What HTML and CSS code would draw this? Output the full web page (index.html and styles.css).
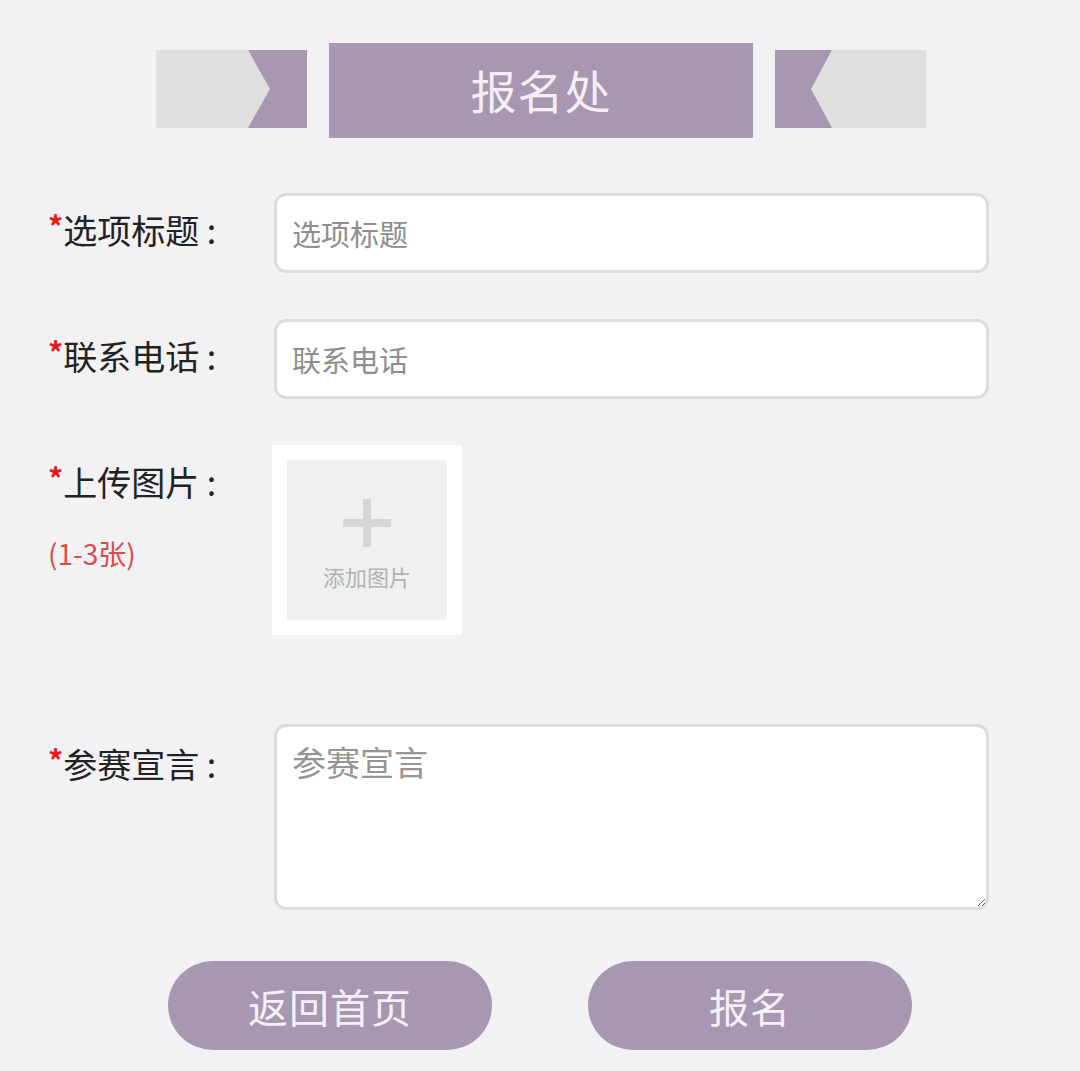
FILE: index.html
```html
<!DOCTYPE html>
<html lang="zh-CN">
<head>
<meta charset="UTF-8" />
<meta name="viewport" content="width=device-width, initial-scale=1" />
<title>报名处</title>
<link rel="stylesheet" href="styles.css">
</head>
<body>
<header class="banner">
  <svg class="ribbon" width="151" height="78" viewBox="0 0 151 78" aria-hidden="true">
    <rect width="151" height="78" fill="#dfdfe0" />
    <polygon points="92,0 151,0 151,78 92,78 114,39" fill="#a797b1" />
  </svg>
  <h1 class="banner-title">报名处</h1>
  <svg class="ribbon" width="151" height="78" viewBox="0 0 151 78" aria-hidden="true">
    <rect width="151" height="78" fill="#dfdfe0" />
    <polygon points="0,0 57,0 36,39 57,78 0,78" fill="#a797b1" />
  </svg>
</header>

<form class="form" onsubmit="return false;">
  <div class="row">
    <label class="label" for="title"><span class="req">*</span>选项标题 :</label>
    <input class="field" id="title" type="text" placeholder="选项标题">
  </div>
  <div class="row">
    <label class="label" for="phone"><span class="req">*</span>联系电话 :</label>
    <input class="field" id="phone" type="tel" placeholder="联系电话">
  </div>
  <div class="row row-top row-upload">
    <div class="label-col">
      <div class="label"><span class="req">*</span>上传图片 :</div>
      <div class="hint">(1-3张)</div>
    </div>
    <div class="upload">
      <div class="upload-inner">
        <svg class="plus" width="48" height="48" viewBox="0 0 48 48" aria-hidden="true">
          <rect x="20" y="0" width="8" height="48" fill="#d6d6d6" />
          <rect x="0" y="20" width="48" height="8" fill="#d6d6d6" />
        </svg>
        <div class="upload-text">添加图片</div>
      </div>
    </div>
  </div>
  <div class="row row-top row-text">
    <label class="label" for="motto"><span class="req">*</span>参赛宣言 :</label>
    <textarea class="field area" id="motto" placeholder="参赛宣言"></textarea>
  </div>
  <div class="actions">
    <button class="btn" type="button">返回首页</button>
    <button class="btn" type="submit">报名</button>
  </div>
</form>
</body>
</html>
```

FILE: styles.css
```css
* {
  box-sizing: border-box;
  margin: 0;
  padding: 0;
}
body {
  background: #f2f1f3;
  font-family: "Noto Sans CJK SC", "Noto Sans", sans-serif;
  color: #222;
}
/* Banner */
.banner {
  display: flex;
  align-items: flex-start;
  justify-content: center;
  gap: 22px;
  padding: 43px 0 0 2px;
  height: 138px;
}
.ribbon {
  display: block;
  flex: none;
  margin-top: 7px;
}
.banner-title {
  width: 424px;
  height: 95px;
  background: #a797b1;
  color: #f6eef6;
  font-size: 46px;
  font-weight: 400;
  text-align: center;
  line-height: 92px;
  letter-spacing: 1px;
}
/* Form */
.form {
  padding: 55px 91px 0 48px;
}
.row {
  display: flex;
  align-items: center;
  margin-bottom: 46px;
}
.row > .label {
  margin-top: -12px;
}
.row-top {
  align-items: flex-start;
}
.label {
  width: 226px;
  flex: none;
  font-size: 34px;
  line-height: 48px;
  color: #222;
  white-space: nowrap;
}
.req {
  color: #e31b1b;
  font-weight: 700;
  font-size: 30px;
  vertical-align: 6px;
}
.label-col {
  width: 226px;
  flex: none;
  padding-top: 8px;
}
.hint {
  margin-top: 27px;
  font-size: 28px;
  line-height: 40px;
  color: #dd4b4b;
}
.field {
  flex: 1;
  height: 80px;
  border: 3px solid #dcdbdd;
  border-radius: 12px;
  background: #fff;
  padding: 0 15px;
  font-family: inherit;
  font-size: 29px;
  color: #333;
  outline: none;
}
.field::placeholder {
  color: #8e8e8e;
}
.row-upload {
  margin-bottom: 89px;
}
.row-text {
  margin-bottom: 51px;
}
.row-text > .label {
  margin-top: 0;
  padding-top: 11px;
}
.area {
  height: 186px;
  padding: 11px 15px;
  font-size: 34px;
  line-height: 48px;
  resize: vertical;
}
.area::placeholder {
  color: #959595;
}
/* Upload */
.upload {
  margin-left: -2px;
  width: 190px;
  height: 190px;
  background: #fff;
  padding: 15px;
}
.upload-inner {
  width: 160px;
  height: 160px;
  background: #f0f0f0;
  display: flex;
  flex-direction: column;
  align-items: center;
  padding-top: 39px;
}
.plus {
  display: block;
}
.upload-text {
  margin-top: 14px;
  font-size: 22px;
  line-height: 30px;
  color: #b2b2b2;
}
/* Buttons */
.actions {
  display: flex;
  justify-content: center;
  gap: 96px;
  margin-left: 43px;
}
.btn {
  width: 324px;
  height: 89px;
  border: none;
  border-radius: 45px / 50%;
  background: #a797b1;
  color: #f7eff7;
  font-family: inherit;
  font-size: 40px;
  letter-spacing: 1px;
  cursor: pointer;
}
```
